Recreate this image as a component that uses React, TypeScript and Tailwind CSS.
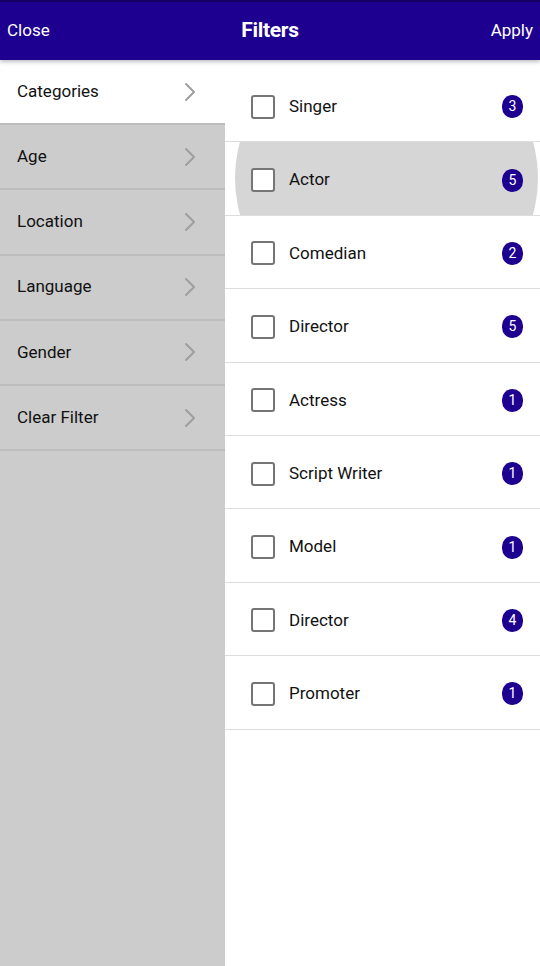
import React from "react";

const sections = ["Categories", "Age", "Location", "Language", "Gender", "Clear Filter"];

const options = [
  { label: "Singer", count: 3 },
  { label: "Actor", count: 5 },
  { label: "Comedian", count: 2 },
  { label: "Director", count: 5 },
  { label: "Actress", count: 1 },
  { label: "Script Writer", count: 1 },
  { label: "Model", count: 1 },
  { label: "Director", count: 4 },
  { label: "Promoter", count: 1 },
];

function Chevron() {
  return (
    <svg width="14" height="20" viewBox="0 0 14 20" fill="none" aria-hidden>
      <path d="M3 2l8 8-8 8" stroke="#9e9e9e" strokeWidth="2" strokeLinecap="round" strokeLinejoin="round" />
    </svg>
  );
}

export default function App() {
  return (
    <div className="flex h-[966px] w-[540px] flex-col overflow-hidden bg-white font-['Roboto',sans-serif]">
      <header className="relative z-10 flex h-[60px] shrink-0 items-center justify-between border-t-2 border-[#14005e] bg-[#1e0091] px-[7px] text-white shadow-[0_2px_4px_rgba(0,0,0,0.25)]">
        <span className="text-[17px]">Close</span>
        <span className="absolute left-1/2 -translate-x-1/2 text-[21px] font-bold tracking-[-0.3px]">Filters</span>
        <span className="text-[17px]">Apply</span>
      </header>

      <div className="flex flex-1">
        <aside className="w-[225px] shrink-0 bg-[#cccccc]">
          {sections.map((s, i) => (
            <div
              key={s}
              className={`flex h-[65.2px] items-center justify-between border-b-2 border-[#bdbdbd] pl-[17px] pr-[28px] text-[17px] text-[#111] ${
                i === 0 ? "bg-white" : ""
              }`}
            >
              <span>{s}</span>
              <Chevron />
            </div>
          ))}
        </aside>

        <main className="flex-1 pt-[9px]">
          {options.map((o, i) => (
            <div
              key={i}
              className="relative flex h-[73.4px] items-center overflow-hidden border-b border-[#dedede] pt-[3px] pl-[26px] pr-[17px]"
            >
              {i === 1 && (
                <div className="absolute left-[10px] top-[-107px] h-[286px] w-[303px] rounded-[50%] bg-[#d6d6d6]" />
              )}
              <div className="relative h-[24px] w-[24px] rounded-[3px] border-2 border-[#757575] bg-white" />
              <span className="relative ml-[14px] flex-1 text-[17px] text-[#111]">{o.label}</span>
              <span className="relative flex h-[23px] w-[21px] items-center justify-center rounded-full bg-[#1e0091] text-[14px] text-white">
                {o.count}
              </span>
            </div>
          ))}
        </main>
      </div>
    </div>
  );
}
